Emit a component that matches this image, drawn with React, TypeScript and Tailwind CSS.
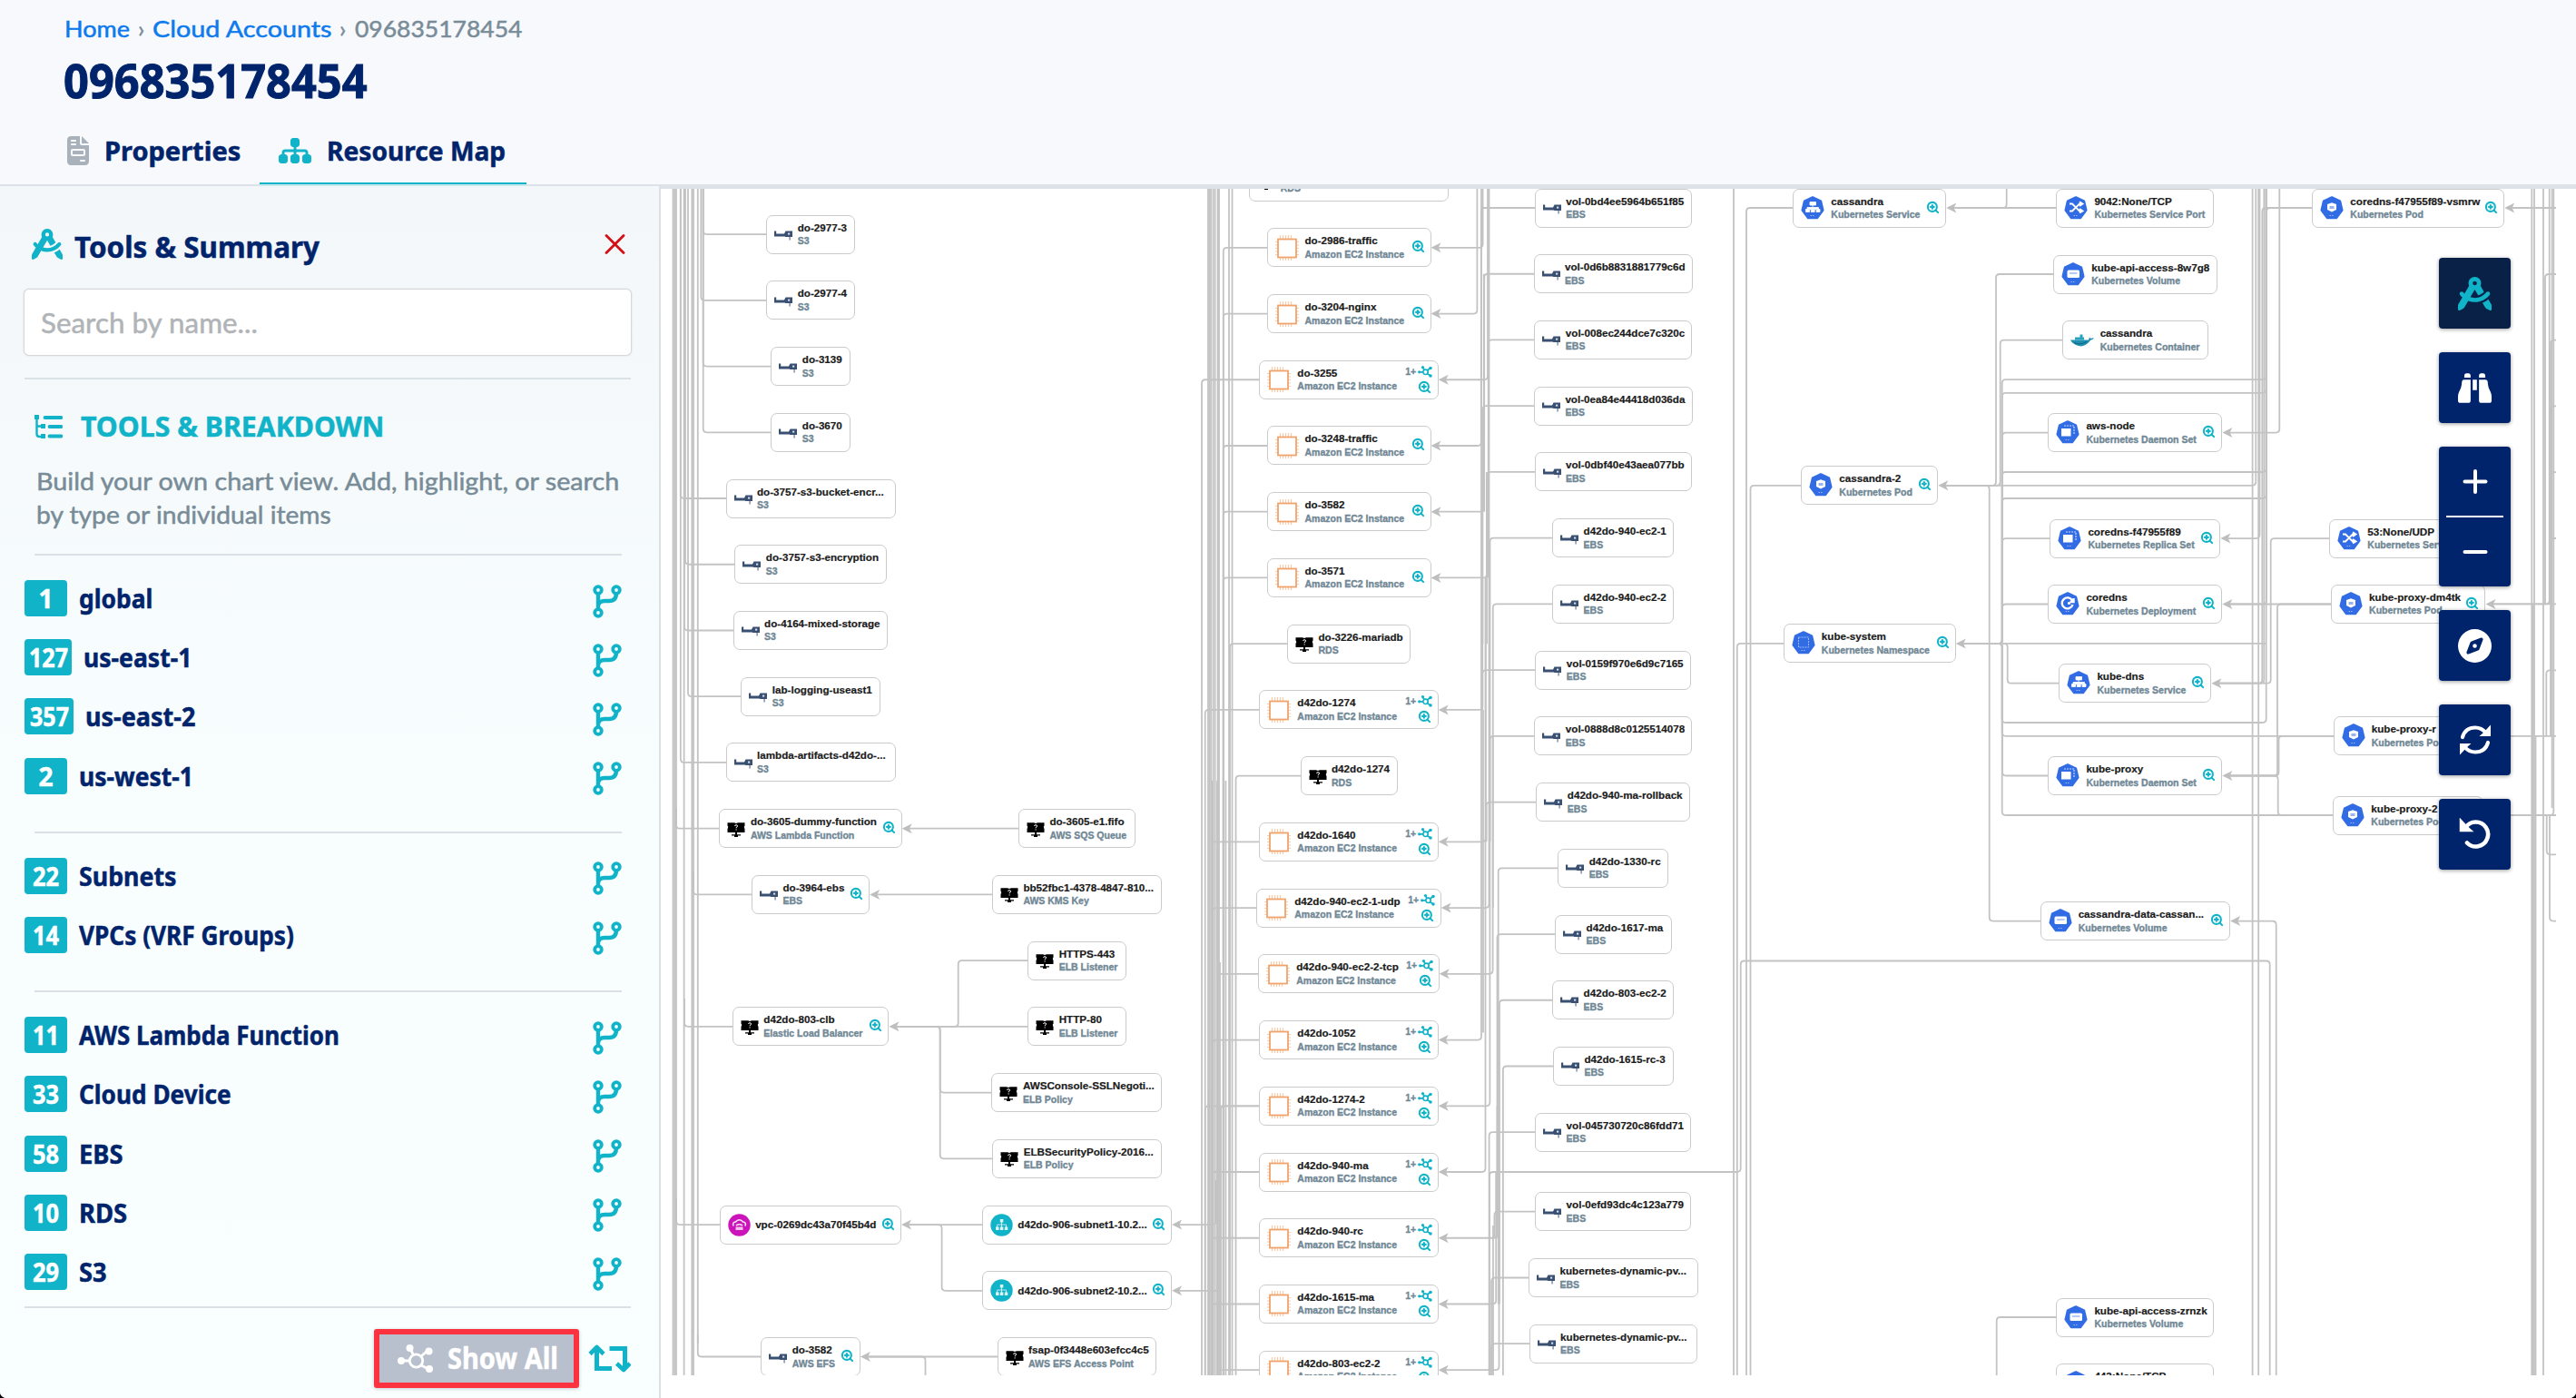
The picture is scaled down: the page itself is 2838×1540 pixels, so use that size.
import { useLayoutEffect, useRef, useState } from "react";
import type { ReactNode } from "react";
import { ZoomIn } from "lucide-react";
import {
  FaBinoculars,
  FaCompass,
  FaCompassDrafting,
  FaFileInvoice,
  FaSitemap,
} from "react-icons/fa6";

/* Text squeezed or stretched horizontally to an exact width. */
function Fit({ w, className = "", children }: { w: number; className?: string; children: ReactNode }) {
  const ref = useRef<HTMLSpanElement>(null);
  const [k, setK] = useState(1);
  useLayoutEffect(() => {
    if (ref.current) setK(w / ref.current.offsetWidth);
  }, [w]);
  return (
    <span className={"block shrink-0 whitespace-nowrap " + className} style={{ width: w }}>
      <span ref={ref} className="inline-block origin-left" style={{ transform: `scaleX(${k})` }}>
        {children}
      </span>
    </span>
  );
}

/* ---------- icons ---------- */

function BranchIcon() {
  return (
    <svg className="h-[37px] w-8 shrink-0" viewBox="0 0 32 37" fill="none" stroke="#10b3c8" strokeWidth="3.8">
      <circle cx="6" cy="6" r="3.8" />
      <circle cx="26" cy="6" r="3.8" />
      <circle cx="6" cy="31" r="3.8" />
      <path d="M6 9.500V27.500M26 9.500c0 6-3 8.500-8 8.500h-5c-4 0-7 2-7 6" strokeWidth="4.400" />
    </svg>
  );
}

function TreeListIcon() {
  return (
    <svg className="h-[26px] w-[31px] shrink-0" viewBox="0 0 31 26" fill="none" stroke="#10b3c8">
      <path d="M2.500 2V21q0 3 3 3H9M2.500 12.500H9" strokeWidth="2.400" />
      <path d="M0 0h5v5H0zM7 10h5v5H7zM7 21h5v5H7z" fill="#10b3c8" stroke="none" />
      <path d="M11.500 3H29.500M16.500 13H29.500M16.500 23.500H29.500" strokeWidth="3.800" strokeLinecap="round" />
    </svg>
  );
}

function HubIcon({ className }: { className: string }) {
  return (
    <svg className={className} viewBox="0 0 39 31" fill="none" stroke="currentColor" strokeWidth="2.800">
      <circle cx="20.500" cy="18" r="7.200" />
      <path d="M13 18H5M17.500 11.500 14 5M26 13 34 6M26 23 34 27" />
      <g fill="currentColor" stroke="none">
        <circle cx="4" cy="18" r="4" />
        <circle cx="13.500" cy="4" r="4" />
        <circle cx="34.500" cy="7.500" r="4" />
        <circle cx="35" cy="27" r="4" />
      </g>
    </svg>
  );
}

function SmallHub() {
  return (
    <svg className="h-[13px] w-[16px]" viewBox="0 0 16 13" fill="none" stroke="#10b3c8" strokeWidth="1.700">
      <circle cx="8.500" cy="6.800" r="2.700" />
      <path d="M6 6.800H2M7 4.500 5.500 1.800M10.500 5 13.800 2.500M10.500 8.800 13.800 10.800" />
      <g fill="#10b3c8" stroke="none">
        <circle cx="1.700" cy="6.800" r="1.600" />
        <circle cx="5.500" cy="1.600" r="1.600" />
        <circle cx="14" cy="2.500" r="1.800" />
        <circle cx="14" cy="11" r="1.800" />
      </g>
    </svg>
  );
}

function SwapIcon() {
  return (
    <svg className="h-[31px] w-[47px]" viewBox="0 0 47 31" fill="none" stroke="#10b3c8" strokeWidth="5">
      <path d="M9.500 6V26.500H26M23.500 4.500H40.500V25" />
      <path d="M2 10.500 9.500 3 17 10.500M31.500 21 39 28 46 21" strokeWidth="4.600" strokeLinejoin="round" />
    </svg>
  );
}

function RefreshIcon() {
  return (
    <svg className="h-9 w-9" viewBox="0 0 36 36" fill="none" stroke="white" strokeWidth="4.200" strokeLinecap="round">
      <path d="M4 15C6 8 11.500 4.500 18 4.500c5 0 8.500 2 11.500 5.500M32 21c-2 7-7.500 10.500-14 10.500-5 0-8.500-2-11.500-5.500" />
      <path d="M35 1.500V14H22.500l4.500-4zM1 34.500V22h12.500L9 26z" fill="white" stroke="none" />
    </svg>
  );
}

function UndoIcon() {
  return (
    <svg className="h-9 w-9" viewBox="0 0 36 36" fill="none" stroke="white" strokeWidth="4.600" strokeLinecap="round">
      <path d="M7 11C10 6.500 14 4.500 18.500 4.500a13.500 13.500 0 1 1-9.500 23" />
      <path d="M1.500 1.500V14.500H14.500L9.500 10z" fill="white" stroke="white" strokeWidth="1.500" />
    </svg>
  );
}

function VolumeIcon() {
  return (
    <svg className="h-5 w-5" viewBox="0 0 20 20">
      <path d="M0 6.500h2.200v3H11l1.500-3H20v6.500h-7.500l-1-.5H0z" fill="#3a5072" />
      <rect x="15" y="8.600" width="2.200" height="2" fill="#d5dbe4" />
      <path d="M16.300 13h1.600v3.500h-1.600z" fill="#8b98ac" />
    </svg>
  );
}

function MonitorIcon() {
  return (
    <svg className="h-5 w-5" viewBox="0 0 20 20">
      <path d="M.5 3.200H8l2 .8 2-.8h7.500V7h-.6v2.500h.6V14H.5V9.500h.6V7H.5zM9 14h2v2.200H9zM5 16.200h10v1.300H5zM8 17.500h4V19H8z" fill="#000" />
      <path d="M8.600 7q.1-1.300 1.500-1.300T11.500 7q0 .9-1.400 1.600v.7M10.100 10.400v1.100" fill="none" stroke="#fff" strokeWidth="1" />
    </svg>
  );
}

function ChipIcon() {
  return (
    <svg className="h-7 w-[26px]" viewBox="0 0 26 28" fill="none" stroke="#f0a46c">
      <rect x="3" y="4.500" width="20" height="20" strokeWidth="1.800" />
      <path
        d="M5.500 0v4M8.500 0v4M11.500 0v4M14.500 0v4M17.500 0v4M5.500 25v3M8.500 25v3M11.500 25v3M14.500 25v3M17.500 25v3M0 7.500h3M0 11h3M0 14.500h3M0 18h3M0 21.500h3M23.500 7.500h2.500M23.500 11h2.500M23.500 14.500h2.500M23.500 18h2.500M23.500 21.500h2.500"
        strokeOpacity="0.55"
        strokeWidth="1.200"
      />
    </svg>
  );
}

const GLYPHS: Record<string, ReactNode> = {
  pod: (
    <>
      <path d="M13 7.200 18 9v6l-5 2.500L8 15V9z" fill="#fff" />
      <path d="M10.500 11h5v3h-5z" fill="#326ce5" fillOpacity="0.5" />
    </>
  ),
  svc: (
    <path
      d="M10 6.500h6.500v3.500H10zM13 10v2.500M7 15v-2.500h12.500V15M5.500 14.500h4v3h-4zM11.200 14.500h4v3h-4zM17 14.500h4v3h-4z"
      fill="#fff"
      stroke="#fff"
      strokeWidth=".8"
      fillRule="evenodd"
    />
  ),
  vol: (
    <>
      <rect x="6.500" y="8.500" width="13.500" height="8.500" rx="1.500" fill="#fff" />
      <path d="M9 12h8.500" stroke="#326ce5" strokeOpacity=".6" strokeWidth="1.200" />
    </>
  ),
  ns: <rect x="7.500" y="7" width="11" height="11" fill="none" stroke="#9db8f5" strokeWidth="1" strokeDasharray="2 1" />,
  ds: (
    <>
      <rect x="6" y="9" width="10.500" height="8.500" fill="#fff" />
      <path d="M9 6h11v9" fill="none" stroke="#c5d5fa" strokeDasharray="2 1" strokeWidth="1.200" />
    </>
  ),
  dep: (
    <path d="M18.500 14a6 6 0 1 1-.5-4.500M19.500 7v4h-4M13 12.500l3 0" fill="none" stroke="#fff" strokeWidth="2.400" />
  ),
  port: <path d="M6 8.500h3l8 8h3M6 16.500h3l8-8h3M17 6.200l3.500 2.300L17 11M17 14l3.500 2.500L17 18.500" fill="none" stroke="#fff" strokeWidth="1.900" />,
};

function KubeIcon({ glyph }: { glyph: string }) {
  return (
    <svg className="h-[27px] w-[26px]" viewBox="0 0 26 27">
      <path
        d="M13 1.500 22 5.700 24.300 15.500 18 24H8L1.700 15.500 4 5.700z"
        fill="#326ce5"
        stroke="#326ce5"
        strokeWidth="2.500"
        strokeLinejoin="round"
      />
      {GLYPHS[glyph]}
      <path d="M10.500 21.500h5" stroke="#fff" strokeOpacity=".5" strokeDasharray="1.500 1" />
    </svg>
  );
}

function DockerIcon() {
  return (
    <svg className="h-[14px] w-[26px]" viewBox="0 0 26 14">
      <path d="M0 6.500h20l1-3 1.500 1.500 3-1q0 2-3.500 2.800Q19 12 12 13.500 3 12.500 0 6.500z" fill="#1e8fae" />
      <path d="M5 3.500h10v3H5zM10.500.5h3v3h-3z" fill="#2aa3bf" />
      <path d="M4 9.500q6 3 14-1" stroke="#0c6683" fill="none" />
    </svg>
  );
}

function VpcIcon() {
  return (
    <svg className="h-[25px] w-[25px]" viewBox="0 0 25 25">
      <circle cx="12.500" cy="12.500" r="12.200" fill="#cc14bb" />
      <path
        d="M6 13.500q-1.500-4 2.500-4.500 1.500-2.300 4-2.300T16.500 9q4 .5 2.500 4.500M9 13q3.500-2.500 7 0"
        fill="none"
        stroke="#fff"
        strokeOpacity=".9"
        strokeWidth="1.600"
      />
      <path d="M8.500 14.500h8V18h-8z" fill="#fff" fillOpacity=".75" />
    </svg>
  );
}

function SubnetIcon() {
  return (
    <svg className="h-[25px] w-[25px]" viewBox="0 0 25 25">
      <circle cx="12.500" cy="12.500" r="12.200" fill="#10b3c8" />
      <path d="M10.800 6h3.500v3.500h-3.500zM6 14.500h3.500V18H6zM10.800 14.500h3.500V18h-3.500zM15.800 14.500h3.500V18h-3.500z" fill="#fff" fillOpacity=".85" />
      <path d="M12.500 9v6M7.700 15v-3h9.800v3" fill="none" stroke="#fff" strokeOpacity=".7" />
    </svg>
  );
}

/* ---------- graph nodes ---------- */

type Node = {
  cx: number;
  cy: number;
  w: number;
  name: string;
  type?: string;
  icon: string;
  zoom?: boolean;
  plus?: boolean;
};

const ROW = 72.73;
const MAP_X = 728;
const MAP_Y = 208;

const n = (cx: number, cy: number, w: number, icon: string, name: string, type?: string, extra?: string): Node => ({
  cx,
  cy,
  w,
  name,
  type,
  icon,
  zoom: extra === "zoom",
  plus: extra === "plus",
});

const A = (i: number) => 258.1 + ROW * i;
const C = (i: number) => 272.8 + ROW * i;
const D = (i: number) => 229 + ROW * i;
const EC2 = "Amazon EC2 Instance";

const NODES: Node[] = [
  n(893, A(0), 97.6, "volume", "do-2977-3", "S3"),
  n(893, A(1), 97.6, "volume", "do-2977-4", "S3"),
  n(893, A(2), 87.4, "volume", "do-3139", "S3"),
  n(893, A(3), 87.4, "volume", "do-3670", "S3"),
  n(893, A(4), 187, "volume", "do-3757-s3-bucket-encr...", "S3"),
  n(893, A(5), 167.3, "volume", "do-3757-s3-encryption", "S3"),
  n(893, A(6), 170.8, "volume", "do-4164-mixed-storage", "S3"),
  n(893, A(7), 153.4, "volume", "lab-logging-useast1", "S3"),
  n(893, A(8), 187, "volume", "lambda-artifacts-d42do-...", "S3"),
  n(893, A(9), 201.2, "monitor", "do-3605-dummy-function", "AWS Lambda Function", "zoom"),
  n(893, A(10), 130, "volume", "do-3964-ebs", "EBS", "zoom"),
  n(893, A(12), 172.4, "monitor", "d42do-803-clb", "Elastic Load Balancer", "zoom"),
  n(893, A(15), 199.7, "vpc", "vpc-0269dc43a70f45b4d", undefined, "zoom"),
  n(893, A(17), 109.5, "volume", "do-3582", "AWS EFS", "zoom"),

  n(1186.4, A(9), 129, "monitor", "do-3605-e1.fifo", "AWS SQS Queue"),
  n(1186.4, A(10), 187, "monitor", "bb52fbc1-4378-4847-810...", "AWS KMS Key"),
  n(1186.4, A(11), 108.4, "monitor", "HTTPS-443", "ELB Listener"),
  n(1186.4, A(12), 108.4, "monitor", "HTTP-80", "ELB Listener"),
  n(1186.4, A(13), 188, "monitor", "AWSConsole-SSLNegoti...", "ELB Policy"),
  n(1186.4, A(14), 186.4, "monitor", "ELBSecurityPolicy-2016...", "ELB Policy"),
  n(1186.7, A(15), 208.8, "subnet", "d42do-906-subnet1-10.2...", undefined, "zoom"),
  n(1186.7, A(16), 208.8, "subnet", "d42do-906-subnet2-10.2...", undefined, "zoom"),
  n(1186.4, A(17), 175.6, "monitor", "fsap-0f3448e603efcc4c5", "AWS EFS Access Point"),

  n(1486, C(-1), 219.5, "monitor", "\u00a0", "RDS"),
  n(1486, C(0), 181, "chip", "do-2986-traffic", EC2, "zoom"),
  n(1486, C(1), 181, "chip", "do-3204-nginx", EC2, "zoom"),
  n(1486, C(2), 197.3, "chip", "do-3255", EC2, "plus"),
  n(1486, C(3), 181, "chip", "do-3248-traffic", EC2, "zoom"),
  n(1486, C(4), 181, "chip", "do-3582", EC2, "zoom"),
  n(1486, C(5), 181, "chip", "do-3571", EC2, "zoom"),
  n(1486, C(6), 136, "monitor", "do-3226-mariadb", "RDS"),
  n(1486, C(7), 197.3, "chip", "d42do-1274", EC2, "plus"),
  n(1486, C(8), 107, "monitor", "d42do-1274", "RDS"),
  n(1486, C(9), 197.3, "chip", "d42do-1640", EC2, "plus"),
  n(1486, C(10), 203.5, "chip", "d42do-940-ec2-1-udp", EC2, "plus"),
  n(1486, C(11), 199.5, "chip", "d42do-940-ec2-2-tcp", EC2, "plus"),
  n(1486, C(12), 197.3, "chip", "d42do-1052", EC2, "plus"),
  n(1486, C(13), 197.3, "chip", "d42do-1274-2", EC2, "plus"),
  n(1486, C(14), 197.3, "chip", "d42do-940-ma", EC2, "plus"),
  n(1486, C(15), 197.3, "chip", "d42do-940-rc", EC2, "plus"),
  n(1486, C(16), 197.3, "chip", "d42do-1615-ma", EC2, "plus"),
  n(1486, C(17), 197.3, "chip", "d42do-803-ec2-2", EC2, "plus"),

  n(1777.3, D(0), 173.2, "volume", "vol-0bd4ee5964b651f85", "EBS"),
  n(1777.3, D(1), 175.6, "volume", "vol-0d6b8831881779c6d", "EBS"),
  n(1777.3, D(2), 174, "volume", "vol-008ec244dce7c320c", "EBS"),
  n(1777.3, D(3), 174.8, "volume", "vol-0ea84e44418d036da", "EBS"),
  n(1777.3, D(4), 173.6, "volume", "vol-0dbf40e43aea077bb", "EBS"),
  n(1777.3, D(5), 134.4, "volume", "d42do-940-ec2-1", "EBS"),
  n(1777.3, D(6), 134.4, "volume", "d42do-940-ec2-2", "EBS"),
  n(1777.3, D(7), 172, "volume", "vol-0159f970e6d9c7165", "EBS"),
  n(1777.3, D(8), 174, "volume", "vol-0888d8c0125514078", "EBS"),
  n(1777.3, D(9), 170, "volume", "d42do-940-ma-rollback", "EBS"),
  n(1777.3, D(10), 122.2, "volume", "d42do-1330-rc", "EBS"),
  n(1777.3, D(11), 128.5, "volume", "d42do-1617-ma", "EBS"),
  n(1777.3, D(12), 134.4, "volume", "d42do-803-ec2-2", "EBS"),
  n(1777.3, D(13), 132.8, "volume", "d42do-1615-rc-3", "EBS"),
  n(1777.3, D(14), 172.4, "volume", "vol-045730720c86fdd71", "EBS"),
  n(1777.3, 1334.7, 172.4, "volume", "vol-0efd93dc4c123a779", "EBS"),
  n(1777.3, 1407.5, 186.6, "volume", "kubernetes-dynamic-pv...", "EBS"),
  n(1777.3, 1480.2, 185.5, "volume", "kubernetes-dynamic-pv...", "EBS"),

  n(2059.8, 229, 169, "k:svc", "cassandra", "Kubernetes Service", "zoom"),
  n(2059.8, 534.8, 151, "k:pod", "cassandra-2", "Kubernetes Pod", "zoom"),
  n(2059.8, 708.9, 190, "k:ns", "kube-system", "Kubernetes Namespace", "zoom"),

  n(2352.4, 229, 174, "k:port", "9042:None/TCP", "Kubernetes Service Port"),
  n(2352.4, 302, 180.4, "k:vol", "kube-api-access-8w7g8", "Kubernetes Volume"),
  n(2352.4, 374.6, 161.5, "docker", "cassandra", "Kubernetes Container"),
  n(2352.4, 476.6, 192, "k:ds", "aws-node", "Kubernetes Daemon Set", "zoom"),
  n(2352.4, 593.1, 188, "k:ds", "coredns-f47955f89", "Kubernetes Replica Set", "zoom"),
  n(2352.4, 665.5, 192, "k:dep", "coredns", "Kubernetes Deployment", "zoom"),
  n(2352.4, 752.7, 168, "k:svc", "kube-dns", "Kubernetes Service", "zoom"),
  n(2352.4, 854.5, 192, "k:ds", "kube-proxy", "Kubernetes Daemon Set", "zoom"),
  n(2352.4, 1014.6, 209.5, "k:vol", "cassandra-data-cassan...", "Kubernetes Volume", "zoom"),
  n(2352.4, 1451, 174, "k:vol", "kube-api-access-zrnzk", "Kubernetes Volume"),
  n(2352.4, 1523.8, 174, "k:port", "443:None/TCP", "Kubernetes Service Port"),

  n(2653.3, 229, 212, "k:pod", "coredns-f47955f89-vsmrw", "Kubernetes Pod", "zoom"),
  n(2653.3, 593.1, 174, "k:port", "53:None/UDP", "Kubernetes Service Port"),
  n(2653.3, 665.4, 170.4, "k:pod", "kube-proxy-dm4tk", "Kubernetes Pod", "zoom"),
  n(2653.3, 810.8, 165.2, "k:pod", "kube-proxy-r", "Kubernetes Pod", "zoom"),
  n(2653.3, 898, 166, "k:pod", "kube-proxy-2", "Kubernetes Pod", "zoom"),
];

function NodeIcon({ icon }: { icon: string }) {
  if (icon === "volume") return <VolumeIcon />;
  if (icon === "monitor") return <MonitorIcon />;
  if (icon === "chip") return <ChipIcon />;
  if (icon === "docker") return <DockerIcon />;
  if (icon === "vpc") return <VpcIcon />;
  if (icon === "subnet") return <SubnetIcon />;
  return <KubeIcon glyph={icon.slice(2)} />;
}

function NodeCard({ node }: { node: Node }) {
  const small = node.icon === "volume" || node.icon === "monitor";
  const round = node.icon === "vpc" || node.icon === "subnet";
  const slot = small ? "w-[25.5px]" : round ? "w-[30px]" : "w-[33px]";
  return (
    <div
      className="absolute flex h-[43px] items-center rounded-[7px] border border-[#cbcbcb] bg-white pl-2"
      style={{ left: node.cx - node.w / 2 - MAP_X, top: node.cy - 21.5 - MAP_Y, width: node.w }}
    >
      <span className={"flex shrink-0 items-center " + slot}>
        <NodeIcon icon={node.icon} />
      </span>
      <div className="flex flex-col whitespace-nowrap text-[11.65px] font-bold leading-[15.5px] text-[#1b1b1b] [-webkit-text-stroke:0.2px_currentColor]">
        <span>{node.name}</span>
        {node.type && (
          <span className="text-[10.5px] text-[#708795] [-webkit-text-stroke:0.35px_currentColor]">{node.type}</span>
        )}
      </div>
      {node.zoom && (
        <ZoomIn className="absolute right-[6px] top-[12px] h-[15px] w-[15px] text-[#10b3c8]" strokeWidth={3.3} />
      )}
      {node.plus && (
        <div className="absolute right-[5.500px] top-[5px] flex flex-col items-end">
          <div className="flex items-center gap-[2px] text-[10.500px] font-bold leading-[13px] text-[#708795] [-webkit-text-stroke:0.3px_currentColor]">
            1+ <SmallHub />
          </div>
          <ZoomIn className="mr-px mt-[3px] h-[15px] w-[15px] text-[#10b3c8]" strokeWidth={3.300} />
        </div>
      )}
    </div>
  );
}

/* ---------- graph edges ---------- */

type P = [number, number];
const TOP = 200;
const BOT = 1520;

/* Polyline with rounded corners. */
function route(pts: P[], r = 4): string {
  let d = `M${pts[0][0]} ${pts[0][1]}`;
  for (let i = 1; i < pts.length - 1; i++) {
    const [x, y] = pts[i];
    const step = (q: P): P => {
      const dx = q[0] - x;
      const dy = q[1] - y;
      const len = Math.hypot(dx, dy) || 1;
      const k = Math.min(r, len / 2) / len;
      return [x + dx * k, y + dy * k];
    };
    const a = step(pts[i - 1]);
    const b = step(pts[i + 1]);
    d += `L${a[0]} ${a[1]}Q${x} ${y} ${b[0]} ${b[1]}`;
  }
  const e = pts[pts.length - 1];
  return d + `L${e[0]} ${e[1]}`;
}

const v = (x: number, y1 = TOP, y2 = BOT): P[] => [[x, y1], [x, y2]];
const h = (y: number, x1: number, x2: number): P[] => [[x1, y], [x2, y]];
/* Vertical from yFrom, turning horizontally to x2 at y. */
const turn = (x: number, yFrom: number, y: number, x2: number): P[] => [[x, yFrom], [x, y], [x2, y]];

const EDGES: P[][] = [
  v(741.5), v(743.2), v(745), v(753.6), v(762.3), v(764), v(768.8, TOP, 1480),
  turn(749.8, TOP, A(4), 800),
  turn(749.8, TOP, A(8), 800),
  turn(755, TOP, A(5), 810),
  turn(754, TOP, A(6), 808),
  turn(758, TOP, A(7), 817),
  turn(774.700, TOP, A(0), 845),
  turn(772.3, TOP, A(1), 845),
  turn(774.7, TOP, A(2), 850),
  turn(774.7, TOP, A(3), 850),
  turn(745, 890, A(9), 793),
  turn(764, 960, A(10), 829),
  turn(754, 1100, A(12), 808),
  turn(745, 1320, A(15), 794),
  turn(768.8, 1470, A(17), 839),

  h(A(9), 1000, 1122),
  h(A(10), 965, 1093),
  [[985, A(12)], [1055.700, A(12)], [1055.7, A(11)], [1133, A(11)]],
  h(A(12), 985, 1133),
  [[985, A(12)], [1035.7, A(12)], [1035.7, A(13)], [1093, A(13)]],
  [[985, A(12)], [1035.7, A(12)], [1035.700, A(14)], [1094, A(14)]],
  h(A(15), 1000, 1083),
  [[1000, A(15)], [1037.600, A(15)], [1037.6, A(16)], [1083, A(16)]],
  h(A(17), 955, 1099),
  [[955, A(17)], [1019.500, A(17)], [1019.5, BOT]],
  [[1298, A(15)], [1339.5, A(15)], [1339.5, 1300]],
  h(A(16), 1298, 1341),

  v(1331), v(1332.6), v(1334.2), v(1336.6), v(1338.6), v(1341.6), v(1343), v(1354), v(1357.5),
  v(1332, 1200), v(1335.5, 860), v(1340.8, 860), v(1344, 1060), v(1350.4, 860),
  turn(1324, BOT, C(2), 1388),
  turn(1327.7, BOT, C(7), 1388),
  turn(1347.8, BOT, C(0), 1397),
  turn(1347.8, BOT, C(1), 1397),
  turn(1347.8, BOT, C(3), 1397),
  turn(1347.8, BOT, C(4), 1397),
  turn(1347.8, BOT, C(5), 1397),
  turn(1355, BOT, C(6), 1418),
  turn(1361.5, BOT, C(8), 1433),
  h(C(9), 1333.6, 1388),
  turn(1336, BOT, C(10), 1385),
  turn(1341, BOT, C(11), 1387),
  turn(1336, BOT, C(12), 1388),
  turn(1327.7, BOT, C(13), 1388),
  turn(1345, BOT, C(13), 1388),
  h(C(14), 1336, 1388),
  h(C(15), 1336, 1388),
  h(C(16), 1336, 1388),
  h(C(17), 1345, 1388),

  turn(1627.4, TOP, C(1), 1583),
  turn(1633.6, TOP, C(0), 1583),
  turn(1632, TOP, C(3), 1583),
  turn(1634.8, D(1), C(4), 1583),
  turn(1639, TOP, C(2), 1591),
  turn(1638, D(4), C(5), 1583),
  turn(1633.3, C(5), C(7), 1591),
  turn(1636.9, C(6), C(9), 1591),
  turn(1640.5, TOP, C(10), 1594),
  turn(1644.6, D(8), C(11), 1592),
  turn(1632, C(3), C(12), 1591),
  turn(1641.4, C(9), C(13), 1591),
  turn(1636.5, C(5), C(14), 1591),
  turn(1649.5, C(13), C(15), 1591),
  turn(1648.2, C(14), C(16), 1591),
  turn(1651.5, C(14), C(17), 1591),
  turn(1631.8, C(3), D(0), 1691),
  turn(1635.2, C(4), D(1), 1690),
  turn(1639.7, C(5), D(2), 1690),
  turn(1633.4, C(6), D(3), 1690),
  turn(1638, C(6), D(4), 1691),
  turn(1641.5, C(9), D(5), 1711),
  turn(1644.8, C(10), D(6), 1711),
  turn(1633.3, C(7), D(7), 1692),
  turn(1641.5, C(9), D(8), 1691),
  turn(1637.6, C(9), D(9), 1693),
  turn(1650.7, C(16), D(10), 1717),
  turn(1649.5, C(15), D(11), 1714),
  turn(1652, C(16), D(12), 1711),
  turn(1655.9, BOT, D(13), 1712),
  turn(1640.600, BOT, D(14), 1692),
  turn(1646.4, C(15), 1334.7, 1692),
  turn(1643.2, BOT, 1407.5, 1685),
  turn(1643.2, BOT, 1480.2, 1686),
  v(1645, 1350), v(1634, C(7), C(12) - 8),
  [[1641, BOT], [1641, 1291], [1917.700, 1291], [1917.7, 1058.5], [2500.7, 1058.5], [2500.700, BOT]],

  v(1910),
  turn(1913.8, BOT, 708.9, 1965),
  turn(1924, BOT, 229, 1976),
  turn(1928.5, BOT, 534.8, 1985),

  h(229, 2150, 2266),
  turn(2210.7, TOP, 229, 2150),
  [[2142, 534.8], [2199, 534.8], [2199, 302], [2263, 302]],
  [[2142, 534.8], [2203.7, 534.8], [2203.7, 374.6], [2272, 374.6]],
  [[2142, 534.8], [2191.7, 534.8], [2191.7, 1014.6], [2248, 1014.6]],
  [[2142, 534.8], [2485.3, 534.8], [2485.3, TOP]],
  ...[418.2, 432.8, 520, 549].map((y): P[] => [[2161, 708.9], [2205.7, 708.9], [2205.7, y], [2496.7, y], [2496.7, TOP]]),
  ...[476.6, 593.1, 665.5].map((y): P[] => [[2161, 708.9], [2206, 708.9], [2206, y], [2258, y]]),
  [[2161, 708.9], [2206, 708.9], [2206, 854.5], [2258, 854.5]],
  [[2161, 708.9], [2205.7, 708.9], [2205.7, 796], [2496.7, 796], [2496.7, TOP]],
  [[2161, 708.9], [2205.7, 708.9], [2205.700, 810.800], [2571, 810.8]],
  [[2161, 708.9], [2205.7, 708.9], [2205.7, 898], [2571, 898]],
  h(708.9, 2161, 2496.7),
  [[2161, 708.9], [2211.7, 708.9], [2211.7, 752.700], [2269, 752.7]],
  turn(2199.7, BOT, 1451, 2266),

  v(2481.6), v(2488.2),
  turn(2489.5, TOP, 593.1, 2453),
  turn(2511.3, TOP, 476.600, 2455),
  [[2548, 229], [2492.3, 229], [2492.3, 752.7], [2443, 752.7]],
  [[2548, 229], [2497, 229], [2497, 665.5], [2455, 665.5]],
  turn(2494.3, TOP, 752.7, 2443),
  [[2567, 593.1], [2501.7, 593.1], [2501.7, 752.7], [2443, 752.7]],
  h(665.5, 2455, 2569),
  [[2569, 665.5], [2509, 665.5], [2509, 854.5], [2455, 854.5]],
  [[2571, 810.8], [2510.500, 810.8], [2510.5, 854.5], [2455, 854.5]],
  [[2571, 898], [2509.7, 898], [2509.7, 854.5], [2455, 854.5]],
  [[2463, 1014.6], [2507.7, 1014.6], [2507.7, BOT]],

  v(2789.3), v(2792), v(2802), v(2790.600, 665), v(2793.500, 810),
  h(229, 2765, 2820),
  h(665.4, 2745, 2820),
  h(810.8, 2742, 2820),
  h(898, 2742, 2820),
  turn(2808.7, TOP, 665.4, 2745),
  turn(2813.3, TOP, 898, 2745),
  turn(2804, 665.4, 302, 2820),
  turn(2810, 665.4, 374.6, 2820),
  turn(2810, 665.4, 447.4, 2820),
  turn(2810, 665.4, 520.2, 2820),
  turn(2810, 810.8, 593, 2820),
  turn(2805.300, 810.8, 738.3, 2820),
  turn(2805.7, 898, 941.3, 2820),
  turn(2809, 898, 1014.6, 2820),
  v(2811.600, TOP, 890),
];

const ARROWS: P[] = [
  [993.7, A(9)], [958.2, A(10)], [979.5, A(12)], [993, A(15)], [947.9, A(17)],
  [1291.1, A(15)], [1291.1, A(16)],
  ...[0, 1, 3, 4, 5].map((i): P => [1576.5, C(i)]),
  ...[2, 7, 9, 12, 13, 14, 15, 16, 17].map((i): P => [1584.7, C(i)]),
  [1587.7, C(10)], [1585.7, C(11)],
  [2144.3, 229], [2135.3, 534.8], [2154.8, 708.9],
  [2448.4, 476.6], [2446.4, 593.1], [2448.4, 665.5], [2436.4, 752.7], [2448.4, 854.5], [2457.2, 1014.6],
  [2759.3, 229], [2738.5, 665.4],
];

function Edges() {
  return (
    <svg className="absolute inset-0 h-[1307px] w-[2088px]" viewBox="728 208 2088 1307" fill="none">
      <g stroke="#c3c3c3" strokeWidth="1.800">
        {EDGES.map((e, i) => (
          <path key={i} d={route(e)} />
        ))}
      </g>
      <g fill="#bebebe">
        {ARROWS.map(([x, y], i) => (
          <path key={i} d={`M${x} ${y}l11 -5.500l-2.800 5.500l2.800 5.500z`} />
        ))}
      </g>
    </svg>
  );
}

/* ---------- sidebar ---------- */

type Row = { count: string; label: string; w: number; badge?: number };

const GROUPS: Row[][] = [
  [
    { count: "1", label: "global", w: 81 },
    { count: "127", label: "us-east-1", w: 119, badge: 52 },
    { count: "357", label: "us-east-2", w: 121, badge: 54 },
    { count: "2", label: "us-west-1", w: 126 },
  ],
  [
    { count: "22", label: "Subnets", w: 107 },
    { count: "14", label: "VPCs (VRF Groups)", w: 237 },
  ],
  [
    { count: "11", label: "AWS Lambda Function", w: 287 },
    { count: "33", label: "Cloud Device", w: 168 },
    { count: "58", label: "EBS", w: 49 },
    { count: "10", label: "RDS", w: 53 },
    { count: "29", label: "S3", w: 31 },
  ],
];

function SummaryRow({ row }: { row: Row }) {
  return (
    <div className="flex h-[65.2px] items-center pr-[10px]">
      <span
        className="flex h-10 items-center justify-center rounded-[4px] bg-[#10b3c8] text-[28px] font-bold leading-10 text-white"
        style={{ width: row.badge ?? 47 }}
      >
        <Fit w={row.count.length * 14 + (row.count.length === 1 ? 2 : 1)}>{row.count}</Fit>
      </span>
      <Fit w={row.w} className="ml-[13px] text-[29px] font-bold leading-10 text-[#00246b]">
        {row.label}
      </Fit>
      <span className="ml-auto pt-[6px]">
        <BranchIcon />
      </span>
    </div>
  );
}

function Sidebar() {
  return (
    <aside className="flex w-[728px] shrink-0 flex-col border-r-2 border-[#dcdfe3] bg-linear-to-b from-[#f3f7f9] via-[#f8fdfe] to-[#f9ffff] pl-[27px] pr-[31px] font-['Noto_Sans'] [-webkit-text-stroke:0.5px_currentColor]">
      <div className="mt-[42px] flex h-[44px] items-center">
        <FaCompassDrafting className="ml-[8px] h-[34px] w-[34px] text-[#10b3c8]" />
        <Fit w={270} className="ml-[13px] mt-[6px] text-[32px] font-bold leading-[44px] text-[#00246b]">
          Tools &amp; Summary
        </Fit>
        <svg className="ml-auto mr-[6px] h-[22px] w-[23px]" viewBox="0 0 23 22" stroke="#d40f14" strokeWidth="2.800" strokeLinecap="round">
          <path d="M2 1.500 21 20.500M21 1.500 2 20.500" />
        </svg>
      </div>
      <div className="mt-[28px] flex h-[72px] items-center rounded-[5px] bg-white pl-[18px] shadow-[0_0_0_1px_#d6d9db,0_0_3px_#bbb]">
        <Fit w={239} className="font-['Lato'] text-[31px] leading-[40px] text-[#b1b4b7]">
          Search by name...
        </Fit>
      </div>
      <div className="mt-[25px] h-[2px] bg-[#dbe2e6]" />
      <div className="mt-[30px] flex h-[44px] items-center">
        <span className="ml-[11px]">
          <TreeListIcon />
        </span>
        <Fit w={334} className="ml-[20px] text-[30px] font-bold leading-[44px] text-[#10b3c8]">
          TOOLS &amp; BREAKDOWN
        </Fit>
      </div>
      <div className="ml-[13px] mt-[20px] font-['Lato'] text-[27.500px] leading-[36.500px] text-[#788c98]">
        <Fit w={642}>Build your own chart view. Add, highlight, or search</Fit>
        <Fit w={325}>by type or individual items</Fit>
      </div>
      <div className="mt-[25px]">
        {GROUPS.map((rows, i) => (
          <div key={i} className={i === 2 ? "" : "pb-[28.500px]"}>
            <div className="ml-[11px] mr-[10px] h-[2px] bg-[#dbe0e6]" />
            <div className="pt-[14.500px]">
              {rows.map((row) => (
                <SummaryRow key={row.label} row={row} />
              ))}
            </div>
          </div>
        ))}
      </div>
      <div className="mt-[5px] h-[2px] bg-[#dbe0e6]" />
      <div className="mt-[23px] flex items-center justify-end gap-[10px]">
        <div className="flex h-[65px] w-[226px] items-center rounded-[3px] border-6 border-[#fb3341] bg-[#b9c0cd] pl-[20px] text-white shadow-[0_1px_4px_#0003]">
          <HubIcon className="h-[31px] w-[39px] shrink-0" />
          <Fit w={122} className="ml-[16px] text-[33px] font-bold leading-[44px]">
            Show All
          </Fit>
        </div>
        <SwapIcon />
      </div>
    </aside>
  );
}

/* ---------- map toolbar ---------- */

const TOOL = "flex h-[78px] w-[79px] items-center justify-center rounded-[4px] bg-[#00246b] text-white shadow-[0_1px_4px_#0006]";

function Toolbar() {
  return (
    <div className="absolute left-[1959px] top-[76px] flex flex-col gap-[26px]">
      <div className="flex h-[78px] w-[79px] items-center justify-center rounded-[4px] bg-[#0a2147] text-[#10b3c8] shadow-[0_1px_4px_#0006]">
        <FaCompassDrafting className="h-[37px] w-[37px]" />
      </div>
      <div className={TOOL}>
        <FaBinoculars className="h-[37px] w-[37px]" />
      </div>
      <div className="flex h-[154px] w-[79px] flex-col items-center rounded-[4px] bg-[#00246b] shadow-[0_1px_4px_#0006]">
        <svg className="h-[76px] w-[28px]" viewBox="0 0 28 76" stroke="white" strokeWidth="4" strokeLinecap="round">
          <path d="M2.500 38.500h23M14 27v23" />
        </svg>
        <div className="h-[2px] w-[63px] bg-white" />
        <svg className="h-[76px] w-[28px]" viewBox="0 0 28 76" stroke="white" strokeWidth="4" strokeLinecap="round">
          <path d="M2.500 38h23" />
        </svg>
      </div>
      <div className={TOOL}>
        <FaCompass className="h-[37px] w-[37px]" />
      </div>
      <div className={TOOL}>
        <RefreshIcon />
      </div>
      <div className={TOOL}>
        <UndoIcon />
      </div>
    </div>
  );
}

/* ---------- page ---------- */

function Header() {
  return (
    <header className="flex h-[205px] flex-col border-b-2 border-[#dce2e7] bg-[#f8f9fc] pl-[70px] font-['Noto_Sans'] [-webkit-text-stroke:0.5px_currentColor]">
      <nav className="mt-[14px] flex h-[34px] pl-px font-['Lato'] text-[25.500px] leading-[34px] text-[#788c98]">
        <Fit w={72} className="text-[#0d7aed]">Home</Fit>
        <span className="ml-[9px] w-[16px]">›</span>
        <Fit w={197} className="text-[#0d7aed]">Cloud Accounts</Fit>
        <span className="ml-[9px] w-[17px]">›</span>
        <Fit w={184}>096835178454</Fit>
      </nav>
      <h1 className="mt-[4px] h-[72px] text-[51.500px] font-bold leading-[72px] text-[#00246b] [-webkit-text-stroke:1px_currentColor]">
        <Fit w={335}>096835178454</Fit>
      </h1>
      <div className="mt-[14px] flex h-[67px] text-[29px] font-bold leading-[56px] text-[#00246b]">
        <div className="flex w-[216px]">
          <FaFileInvoice className="ml-[4px] mt-[12px] h-[32px] w-[24px] text-[#a9b2ba]" />
          <Fit w={150} className="ml-[17px]">Properties</Fit>
        </div>
        <div className="relative flex w-[294px] pl-[21px]">
          <FaSitemap className="mt-[12px] h-[32px] w-[36px] text-[#10b3c8]" />
          <Fit w={197} className="ml-[17px]">Resource Map</Fit>
          <div className="absolute -bottom-0.5 left-0 z-10 h-[4px] w-full border-b-2 border-[#c5e9ee] bg-[#10b3c8]" />
        </div>
      </div>
    </header>
  );
}

export default function App() {
  return (
    <div className="h-[1540px] w-[2838px] overflow-hidden bg-black">
      <div className="flex h-full flex-col overflow-hidden rounded-b-[7px] bg-white">
        <Header />
        <div className="flex min-h-0 flex-1">
          <Sidebar />
          <main className="relative min-w-0 flex-1 overflow-hidden border-t-3 border-[#dce2e7] bg-white font-['Liberation_Sans']">
            <div className="relative h-[1307px] w-[2088px] overflow-hidden">
              <Edges />
              {NODES.map((node, i) => (
                <NodeCard key={i} node={node} />
              ))}
            </div>
            <Toolbar />
          </main>
        </div>
      </div>
    </div>
  );
}
